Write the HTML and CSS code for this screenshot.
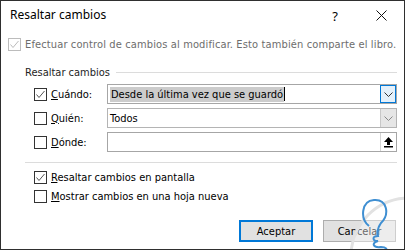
FILE: index.html
```html
<!DOCTYPE html>
<html lang="es">
<head>
    <meta charset="UTF-8">
    <title>Resaltar cambios</title>
    <link rel="stylesheet" href="styles.css">
</head>
<body>
    <div class="dialog">
        <!-- Title bar -->
        <div class="titlebar">
            <span class="title">Resaltar cambios</span>
            <span class="caption-btn">?</span>
            <span class="caption-btn">
                <svg width="11" height="11" viewBox="0 0 11 11"><path d="M0.5 0.5 L10.5 10.5 M10.5 0.5 L0.5 10.5" stroke="#111" stroke-width="1" fill="none"/></svg>
            </span>
        </div>

        <div class="content">
            <div class="check-row disabled">
                <span class="box checked"><svg viewBox="0 0 11 11"><path d="M1.5 5.5 L4 8.5 L9.5 2" /></svg></span>
                <span>Efectuar control de cambios al modificar. Esto también comparte el libro.</span>
            </div>

            <div class="group-head">
                <span>Resaltar cambios</span>
                <span class="rule"></span>
            </div>

            <div class="fields">
                <div class="field-label">
                    <span class="box checked"><svg viewBox="0 0 11 11"><path d="M1.5 5.5 L4 8.5 L9.5 2" /></svg></span>
                    <span><u>C</u>uándo:</span>
                </div>
                <div class="combo">
                    <span class="combo-text"><span class="selected">Desde la última vez que se guardó</span><span class="caret"></span></span>
                    <span class="drop active"><svg width="9" height="5" viewBox="0 0 9 5"><path d="M0.5 0.5 L4.5 4.5 L8.5 0.5" /></svg></span>
                </div>

                <div class="field-label">
                    <span class="box"></span>
                    <span><u>Q</u>uién:</span>
                </div>
                <div class="combo inactive">
                    <span class="combo-text">Todos</span>
                    <span class="drop"><svg width="9" height="5" viewBox="0 0 9 5"><path d="M0.5 0.5 L4.5 4.5 L8.5 0.5" /></svg></span>
                </div>

                <div class="field-label">
                    <span class="box"></span>
                    <span><u>D</u>ónde:</span>
                </div>
                <div class="combo">
                    <span class="combo-text"></span>
                    <span class="drop ref"><svg width="11" height="12" viewBox="0 0 11 12"><path d="M5.5 1 L10 6 L7 6 L7 9 L4 9 L4 6 L1 6 Z" fill="#000"/><rect x="1" y="10" width="9" height="1.5" fill="#000"/></svg></span>
                </div>
            </div>

            <div class="separator"></div>

            <div class="options">
                <div class="check-row">
                    <span class="box checked"><svg viewBox="0 0 11 11"><path d="M1.5 5.5 L4 8.5 L9.5 2" /></svg></span>
                    <span><u>R</u>esaltar cambios en pantalla</span>
                </div>
                <div class="check-row">
                    <span class="box"></span>
                    <span><u>M</u>ostrar cambios en una hoja nueva</span>
                </div>
            </div>

            <div class="buttons">
                <button class="btn default">Aceptar</button>
                <button class="btn">Cancelar</button>
            </div>
        </div>

        <!-- watermark -->
        <svg class="watermark" width="406" height="251" viewBox="0 0 406 251">
            <circle cx="409" cy="256" r="58" fill="rgba(255,255,255,0.4)" stroke="#e2e2e2" stroke-width="3"/>
            <path d="M369 226 C360 219 361 201 374 200 C387 199 390 214 381 223 C378 227 377 231 378 236 C372 236 372 241 378 241 C371 243 373 248 381 247 C386 247 388 249 385 252" fill="none" stroke="#3f8fd2" stroke-width="2"/>
        </svg>
    </div>
</body>
</html>
```

FILE: styles.css
```css
/* General */
body {
    margin: 0;
    background: #ffffff;
    font-family: "DejaVu Sans Condensed", "DejaVu Sans", sans-serif;
    font-size: 11px;
    color: #000;
}

.dialog {
    position: relative;
    box-sizing: border-box;
    width: 405px;
    height: 250px;
    border: 1px solid #2f2f2f;
    background: #fff;
    overflow: hidden;
}

/* Title bar */
.titlebar {
    display: flex;
    align-items: center;
    height: 29px;
}

.title {
    flex: 1;
    padding-left: 9px;
    font-family: "Noto Sans", sans-serif;
    font-size: 12px;
    padding-bottom: 2px;
}

.caption-btn {
    display: flex;
    justify-content: center;
    align-items: center;
    width: 46px;
    height: 29px;
    font-family: "Noto Sans", sans-serif;
    font-size: 13px;
}

/* Content */
.content {
    padding: 0 7px 0 7px;
}

.check-row {
    display: flex;
    align-items: center;
    gap: 4px;
    height: 14px;
}

.content > .check-row {
    margin-top: 7px;
}

.disabled {
    color: #6d6d6d;
    letter-spacing: 0.13px;
}

.box {
    box-sizing: border-box;
    width: 13px;
    height: 13px;
    border: 1px solid #333;
    background: #fff;
    flex: none;
}

.box svg {
    display: block;
    width: 11px;
    height: 11px;
    fill: none;
    stroke: #555;
    stroke-width: 1;
}

.disabled .box {
    border-color: #bcbcbc;
}

.disabled .box svg {
    stroke: #bcbcbc;
}

/* Group */
.group-head {
    display: flex;
    align-items: center;
    gap: 6px;
    height: 14px;
    margin-top: 14px;
    padding-left: 17px;
    color: #1e1e1e;
}

.group-head .rule {
    flex: 1;
    height: 1px;
    background: #dcdcdc;
}

.fields {
    display: grid;
    grid-template-columns: 73px 1fr;
    grid-auto-rows: 20px;
    row-gap: 4px;
    margin-top: 5px;
    padding-left: 26px;
}

.field-label {
    display: flex;
    align-items: center;
    gap: 4px;
}

.combo {
    display: flex;
    box-sizing: border-box;
    border: 1px solid #a6a6a6;
    background: #fff;
}

.combo.inactive {
    border-color: #b4b4b4;
}

.combo-text {
    flex: 1;
    display: flex;
    align-items: center;
    padding-left: 2px;
}

.selected {
    background: #cccccc;
    padding: 1px 1px;
}

.caret {
    width: 1px;
    height: 14px;
    background: #000;
}

.drop {
    display: flex;
    justify-content: center;
    align-items: center;
    width: 15px;
    background: #e6e6e6;
    border-left: 1px solid #c8c8c8;
}

.drop svg path {
    fill: none;
    stroke: #888;
}

.drop.active {
    background: #e5f1fb;
    border: 1px solid #0078d7;
    width: 14px;
}

.drop.active svg path {
    stroke: #333;
}

.drop.ref {
    background: #fff;
    border-left: 1px solid #d4d4d4;
}

.drop.ref svg path {
    stroke: none;
    fill: #000;
}

.separator {
    height: 1px;
    background: #dcdcdc;
    margin: 10px 0 0 17px;
}

.options {
    display: flex;
    flex-direction: column;
    gap: 5px;
    margin-top: 7px;
    padding-left: 26px;
}

/* Buttons */
.buttons {
    display: flex;
    justify-content: flex-end;
    gap: 10px;
    margin-top: 17px;
    padding-right: 1px;
}

.btn {
    box-sizing: border-box;
    width: 73px;
    height: 22px;
    font-family: inherit;
    font-size: 11px;
    background: #e1e1e1;
    border: 1px solid #adadad;
    padding: 0;
}

.btn.default {
    width: 74px;
    border: 2px solid #0078d7;
}

.watermark {
    position: absolute;
    left: -1px;
    top: -1px;
    pointer-events: none;
}
```
